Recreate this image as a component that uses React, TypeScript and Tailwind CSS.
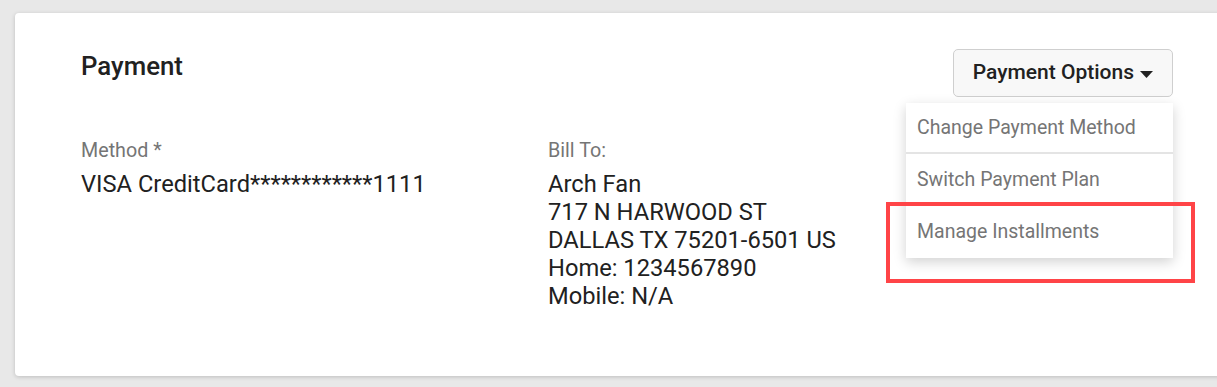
export default function App() {
  return (
    <div className="min-h-screen bg-[#e8e8e8] pt-[13px] pl-[15px] overflow-hidden" style={{ fontFamily: "Roboto, 'Liberation Sans', sans-serif" }}>
      <div className="w-[1215px] h-[363px] bg-white rounded-[4px] shadow-[0_1px_4px_rgba(0,0,0,0.18)] pl-[66px] pr-[57px] pt-[36px]">
        <div className="flex items-start justify-between">
          <h2 className="mt-[2px] text-[25.8px] leading-[30px] font-medium text-[#212121]">Payment</h2>

          <div className="relative">
            <button className="h-[48px] pl-[19px] pr-[19px] flex items-center gap-[6px] rounded-[5px] border border-[#cfcfcf] bg-[#f8f8f8] text-[21px] font-medium text-[#212121]">
              Payment Options
              <svg width="13" height="7" viewBox="0 0 13 7" className="mt-[2px]">
                <path d="M0 0h13L6.5 7z" fill="#222" />
              </svg>
            </button>

            <div className="absolute right-0 top-full mt-[6px] w-[267px] bg-white shadow-[0_4px_12px_rgba(0,0,0,0.18)] z-10">
              <div className="h-[51px] px-[11px] flex items-center text-[19.5px] text-[#757575] border-b-2 border-[#e4e4e4]">Change Payment Method</div>
              <div className="h-[51px] px-[11px] flex items-center text-[19.5px] text-[#757575]">Switch Payment Plan</div>
              <div className="h-[53px] px-[11px] flex items-center text-[19.5px] text-[#757575]">Manage Installments</div>
            </div>

            <div className="absolute right-[-22px] top-[153px] w-[309px] h-[81px] border-[4px] border-[#ff4447] z-20 pointer-events-none" />
          </div>
        </div>

        <div className="mt-[40px] flex">
          <div className="w-[467px]">
            <div className="text-[19.7px] leading-[28px] text-[#757575]">Method *</div>
            <div className="mt-[5px] text-[23.7px] leading-[28px] text-[#212121]">VISA CreditCard************1111</div>
          </div>
          <div>
            <div className="text-[19.7px] leading-[28px] text-[#757575]">Bill To:</div>
            <div className="mt-[5px] text-[23.7px] leading-[28px] text-[#212121]">
              <div>Arch Fan</div>
              <div>717 N HARWOOD ST</div>
              <div>DALLAS TX 75201-6501 US</div>
              <div>Home: 1234567890</div>
              <div>Mobile: N/A</div>
            </div>
          </div>
        </div>
      </div>
    </div>
  );
}
